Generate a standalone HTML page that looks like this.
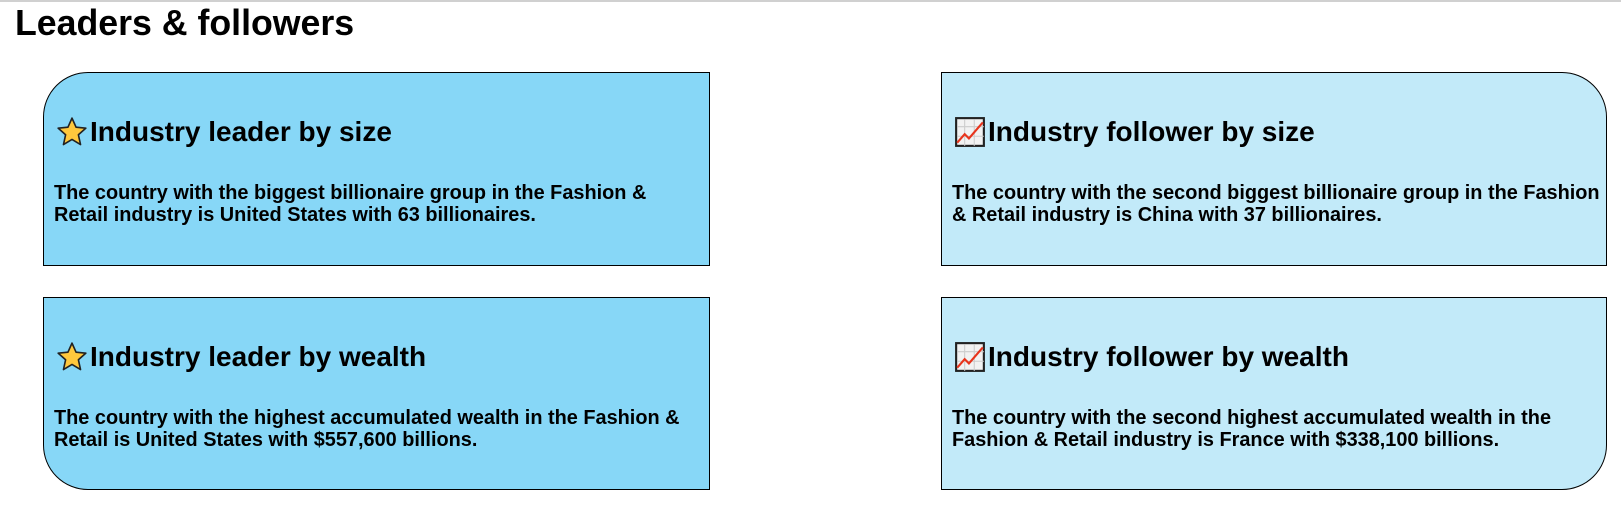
<!DOCTYPE html>
<html><head><style>
html,body{margin:0;padding:0;background:#fff;width:1621px;height:508px;overflow:hidden;font-family:"Liberation Sans",Arial,sans-serif;}
.top{position:absolute;left:0;top:0;width:1621px;height:2px;background:#d0d0d0}
h1{position:absolute;left:15px;top:3px;margin:0;font-size:35.7px;font-weight:bold;}
.box{position:absolute;box-sizing:border-box;border:1px solid #000;width:667px;height:194px;}
.l{background:#87d7f7;left:43px}
.r{background:#c2eaf9;left:941px;width:666px}
.box h2{position:absolute;left:12px;top:41px;height:36px;margin:0;font-size:28px;font-weight:bold;display:flex;align-items:center;}
.box h2 svg{margin-right:2px}
.box p{position:absolute;left:10px;top:109px;margin:0;font-size:19.9px;font-weight:bold;line-height:22px;white-space:nowrap}
</style></head><body>
<div class="top"></div>
<h1>Leaders &amp; followers</h1>

<div class="box l" style="top:72px;border-top-left-radius:45px">
<h2><svg width="32" height="32" viewBox="0 0 30 30"><path d="M15 2 L18.8 10.5 L28 11.4 L21 17.6 L23 26.8 L15 22 L7 26.8 L9 17.6 L2 11.4 L11.2 10.5 Z" fill="#ffc83d" stroke="#222" stroke-width="1.5" stroke-linejoin="round"/></svg>Industry leader by size</h2>
<p>The country with the biggest billionaire group in the Fashion &amp;<br>Retail industry is United States with 63 billionaires.</p>
</div>

<div class="box r" style="top:72px;border-top-right-radius:45px">
<h2><svg width="32" height="32" viewBox="0 0 30 30"><rect x="2" y="2" width="26" height="26" fill="#f2f2f2" stroke="#222" stroke-width="2"/><path d="M10 3V28M19 3V28M3 10H28M3 19H28" stroke="#ccc" stroke-width="1"/><path d="M3 25 L10 17 L14 21 L27 6" fill="none" stroke="#e8341c" stroke-width="2"/></svg>Industry follower by size</h2>
<p>The country with the second biggest billionaire group in the Fashion<br>&amp; Retail industry is China with 37 billionaires.</p>
</div>

<div class="box l" style="top:297px;height:193px;border-bottom-left-radius:45px">
<h2><svg width="32" height="32" viewBox="0 0 30 30"><path d="M15 2 L18.8 10.5 L28 11.4 L21 17.6 L23 26.8 L15 22 L7 26.8 L9 17.6 L2 11.4 L11.2 10.5 Z" fill="#ffc83d" stroke="#222" stroke-width="1.5" stroke-linejoin="round"/></svg>Industry leader by wealth</h2>
<p>The country with the highest accumulated wealth in the Fashion &amp;<br>Retail is United States with $557,600 billions.</p>
</div>

<div class="box r" style="top:297px;height:193px;border-bottom-right-radius:45px">
<h2><svg width="32" height="32" viewBox="0 0 30 30"><rect x="2" y="2" width="26" height="26" fill="#f2f2f2" stroke="#222" stroke-width="2"/><path d="M10 3V28M19 3V28M3 10H28M3 19H28" stroke="#ccc" stroke-width="1"/><path d="M3 25 L10 17 L14 21 L27 6" fill="none" stroke="#e8341c" stroke-width="2"/></svg>Industry follower by wealth</h2>
<p>The country with the second highest accumulated wealth in the<br>Fashion &amp; Retail industry is France with $338,100 billions.</p>
</div>
</body></html>
